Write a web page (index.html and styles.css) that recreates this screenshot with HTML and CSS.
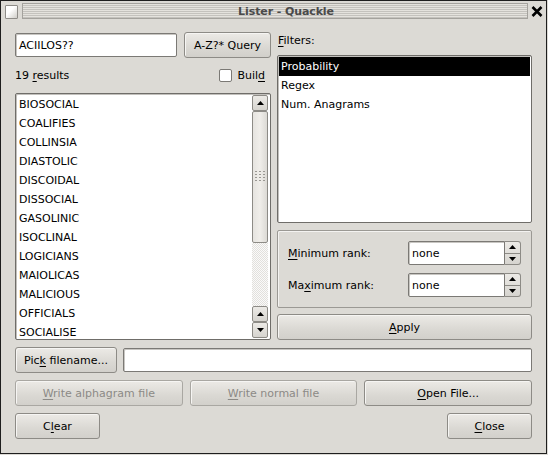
FILE: index.html
```html
<!DOCTYPE html>
<html>
<head>
<meta charset="utf-8">
<link rel="stylesheet" href="styles.css">
</head>
<body>
<div class="window">
  <div class="titlebar">
    <div class="ticon"></div>
    <div class="stripe"><span class="ttext">Lister - Quackle</span></div>
    <div class="tclose"><svg width="12" height="11" viewBox="0 0 12 11"><path d="M1.5 1 L10.5 10 M10.5 1 L1.5 10" stroke="#000" stroke-width="2.6" fill="none"/></svg></div>
  </div>
  <div class="content">
    <div class="top">
      <div class="leftcol">
        <div class="queryrow">
          <div class="field query">ACIILOS??</div>
          <div class="btn qbtn"><span>A-Z?* Query</span></div>
        </div>
        <div class="resrow">
          <span>19 <u>r</u>esults</span>
          <span class="build"><span class="check"></span><span>Buil<u>d</u></span></span>
        </div>
        <div class="listbox reslist">
          <div class="items">
            <div class="item">BIOSOCIAL</div>
            <div class="item">COALIFIES</div>
            <div class="item">COLLINSIA</div>
            <div class="item">DIASTOLIC</div>
            <div class="item">DISCOIDAL</div>
            <div class="item">DISSOCIAL</div>
            <div class="item">GASOLINIC</div>
            <div class="item">ISOCLINAL</div>
            <div class="item">LOGICIANS</div>
            <div class="item">MAIOLICAS</div>
            <div class="item">MALICIOUS</div>
            <div class="item">OFFICIALS</div>
            <div class="item">SOCIALISE</div>
          </div>
          <div class="scrollbar">
            <div class="sbtn"><svg width="7" height="4" viewBox="0 0 7 4"><path d="M3.5 0 L7 4 L0 4 Z" fill="#000"/></svg></div>
            <div class="thumb"><svg width="10" height="12" viewBox="0 0 10 12"><g fill="#9a9893"><rect x="0" y="0" width="2" height="1"/><rect x="4" y="0" width="2" height="1"/><rect x="8" y="0" width="2" height="1"/><rect x="0" y="3" width="2" height="1"/><rect x="4" y="3" width="2" height="1"/><rect x="8" y="3" width="2" height="1"/><rect x="0" y="6" width="2" height="1"/><rect x="4" y="6" width="2" height="1"/><rect x="8" y="6" width="2" height="1"/><rect x="0" y="9" width="2" height="1"/><rect x="4" y="9" width="2" height="1"/><rect x="8" y="9" width="2" height="1"/></g></svg></div>
            <div class="trough"></div>
            <div class="sbtn"><svg width="7" height="4" viewBox="0 0 7 4"><path d="M3.5 0 L7 4 L0 4 Z" fill="#000"/></svg></div>
            <div class="sbtn"><svg width="7" height="4" viewBox="0 0 7 4"><path d="M0 0 L7 0 L3.5 4 Z" fill="#000"/></svg></div>
          </div>
        </div>
      </div>
      <div class="rightcol">
        <div class="flabel"><u>F</u>ilters:</div>
        <div class="listbox filterlist">
          <div class="fitem sel">Probability</div>
          <div class="fitem">Regex</div>
          <div class="fitem">Num. Anagrams</div>
        </div>
        <div class="group">
          <div class="grow">
            <span><u>M</u>inimum rank:</span>
            <div class="spin">
              <div class="field spinfield">none</div>
              <div class="arrows">
                <div class="arr up"><svg width="7" height="4" viewBox="0 0 7 4"><path d="M3.5 0 L7 4 L0 4 Z" fill="#000"/></svg></div>
                <div class="arr"><svg width="7" height="4" viewBox="0 0 7 4"><path d="M0 0 L7 0 L3.5 4 Z" fill="#000"/></svg></div>
              </div>
            </div>
          </div>
          <div class="grow">
            <span>Ma<u>x</u>imum rank:</span>
            <div class="spin">
              <div class="field spinfield">none</div>
              <div class="arrows">
                <div class="arr up"><svg width="7" height="4" viewBox="0 0 7 4"><path d="M3.5 0 L7 4 L0 4 Z" fill="#000"/></svg></div>
                <div class="arr"><svg width="7" height="4" viewBox="0 0 7 4"><path d="M0 0 L7 0 L3.5 4 Z" fill="#000"/></svg></div>
              </div>
            </div>
          </div>
        </div>
        <div class="btn apply"><span><u>A</u>pply</span></div>
      </div>
    </div>
    <div class="filerow">
      <div class="btn pick"><span>Pic<u>k</u> filename...</span></div>
      <div class="field fname"></div>
    </div>
    <div class="writerow">
      <div class="btn disabled"><span><u>W</u>rite alphagram file</span></div>
      <div class="btn disabled"><span><u>W</u>rite normal file</span></div>
      <div class="btn"><span><u>O</u>pen File...</span></div>
    </div>
    <div class="lastrow">
      <div class="btn small"><span>C<u>l</u>ear</span></div>
      <div class="btn small"><span><u>C</u>lose</span></div>
    </div>
  </div>
</div>
</body>
</html>
```

FILE: styles.css
```css
html, body {
  margin: 0;
  padding: 0;
  background: #dcdad5;
}
body {
  font-family: "DejaVu Sans", "Noto Sans", sans-serif;
  font-size: 11px;
  color: #000;
}
u { text-decoration: underline; text-underline-offset: 2px; }

.window {
  box-sizing: border-box;
  width: 547px;
  height: 454px;
  border: 1px solid #1e1e1e;
  background: #dcdad5;
  display: flex;
  flex-direction: column;
}

.titlebar {
  height: 20px;
  display: flex;
  align-items: flex-start;
  padding-top: 2px;
  box-sizing: border-box;
}
.ticon {
  width: 11px;
  height: 12px;
  margin: 2px 0 0 4px;
  border: 1px solid #8e8c88;
  border-radius: 1px;
  background: linear-gradient(135deg, #ffffff 40%, #cfcdc8);
}
.stripe {
  flex: 1;
  height: 14px;
  margin-left: 4px;
  border: 1px solid #a4a29d;
  background: repeating-linear-gradient(to bottom, #e4e2dd 0 1px, #c4c2bd 1px 2px);
  display: flex;
  align-items: center;
  justify-content: center;
  padding-left: 22px;
}
.ttext {
  font-weight: bold;
  font-size: 11px;
  color: #4a4a4a;
  letter-spacing: -0.1px;
}
.tclose {
  width: 18px;
  display: flex;
  justify-content: center;
  padding-top: 3px;
}

.content {
  padding: 11px 0 0 14px;
  width: 517px;
  display: flex;
  flex-direction: column;
}
.top {
  display: flex;
  gap: 6px;
}
.leftcol {
  width: 256px;
  display: flex;
  flex-direction: column;
}
.rightcol {
  width: 255px;
  display: flex;
  flex-direction: column;
}

.field {
  box-sizing: border-box;
  background: #fff;
  border: 1px solid #7b7975;
  border-radius: 2px;
  box-shadow: inset 1px 1px 0 #c8c6c2;
  display: flex;
  align-items: center;
  padding-left: 3px;
}

.btn {
  box-sizing: border-box;
  height: 26px;
  border: 1px solid #8d8b86;
  border-radius: 3px;
  background: linear-gradient(to bottom, #eceae6, #dad8d3 60%, #d2d0cb);
  box-shadow: inset 1px 1px 0 #f6f5f3;
  display: flex;
  align-items: center;
  justify-content: center;
}
.btn.disabled {
  color: #8c8a86;
  border-color: #a9a7a2;
}

.queryrow {
  display: flex;
  gap: 7px;
  height: 26px;
  align-items: center;
}
.query {
  width: 162px;
  height: 24px;
}
.qbtn {
  flex: 1;
}

.resrow {
  height: 19px;
  margin: 8px 0 8px;
  display: flex;
  justify-content: space-between;
  align-items: center;
  padding-right: 6px;
}
.build {
  display: flex;
  align-items: center;
}
.check {
  box-sizing: border-box;
  width: 13px;
  height: 13px;
  border: 1px solid #7b7975;
  border-radius: 2px;
  background: #fff;
  margin-right: 5px;
}

.listbox {
  box-sizing: border-box;
  background: #fff;
  border: 1px solid #6f6d69;
  border-radius: 2px;
  box-shadow: inset 1px 1px 0 #c2c0bc;
}
.reslist {
  height: 247px;
  display: flex;
  padding: 1px 1px 1px 1px;
}
.items {
  flex: 1;
  padding-top: 0;
}
.item {
  height: 19px;
  line-height: 19px;
  padding-left: 2px;
}

.scrollbar {
  width: 16px;
  display: flex;
  flex-direction: column;
  margin-right: 1px;
}
.sbtn {
  box-sizing: border-box;
  height: 16px;
  border: 1px solid #8d8b86;
  border-radius: 2px;
  background: linear-gradient(to bottom, #eceae6, #d6d4cf);
  display: flex;
  align-items: center;
  justify-content: center;
}
.thumb {
  box-sizing: border-box;
  height: 132px;
  border: 1px solid #8d8b86;
  border-radius: 2px;
  background: linear-gradient(to right, #e6e4e0, #f0eeea 50%, #dcdad5);
  display: flex;
  align-items: center;
  justify-content: center;
}
.trough {
  flex: 1;
  background: repeating-conic-gradient(#e2e0dc 0 25%, #fafafa 0 50%) 0 0 / 2px 2px;
}

.flabel {
  height: 23px;
  line-height: 18px;
  padding-left: 1px;
}
.filterlist {
  height: 168px;
  padding: 1px;
}
.fitem {
  height: 19px;
  line-height: 19px;
  padding-left: 2px;
}
.fitem.sel {
  background: #000;
  color: #fff;
}

.group {
  box-sizing: border-box;
  height: 78px;
  margin-top: 7px;
  border: 1px solid #9b9994;
  border-radius: 2px;
  box-shadow: inset 1px 1px 0 #f4f3f1;
  padding: 10px 10px 0 10px;
  display: flex;
  flex-direction: column;
  gap: 8px;
}
.grow {
  height: 24px;
  display: flex;
  justify-content: space-between;
  align-items: center;
}
.spin {
  display: flex;
  height: 24px;
}
.spinfield {
  width: 97px;
  height: 24px;
  border-radius: 2px 0 0 2px;
}
.arrows {
  box-sizing: border-box;
  width: 16px;
  height: 24px;
  border: 1px solid #8d8b86;
  border-left: none;
  border-radius: 0 3px 3px 0;
  display: flex;
  flex-direction: column;
  background: linear-gradient(to bottom, #eceae6, #d6d4cf);
}
.arr {
  flex: 1;
  display: flex;
  align-items: center;
  justify-content: center;
}
.arr.up {
  border-bottom: 1px solid #8d8b86;
}

.apply {
  margin-top: 6px;
}

.filerow {
  margin-top: 7px;
  display: flex;
  gap: 6px;
  align-items: center;
}
.pick {
  width: 102px;
}
.fname {
  flex: 1;
  height: 24px;
}
.writerow {
  margin-top: 7px;
  display: grid;
  grid-template-columns: 1fr 1fr 1fr;
  gap: 7px;
}
.lastrow {
  margin-top: 7px;
  display: flex;
  justify-content: space-between;
}
.small {
  width: 85px;
}
```
